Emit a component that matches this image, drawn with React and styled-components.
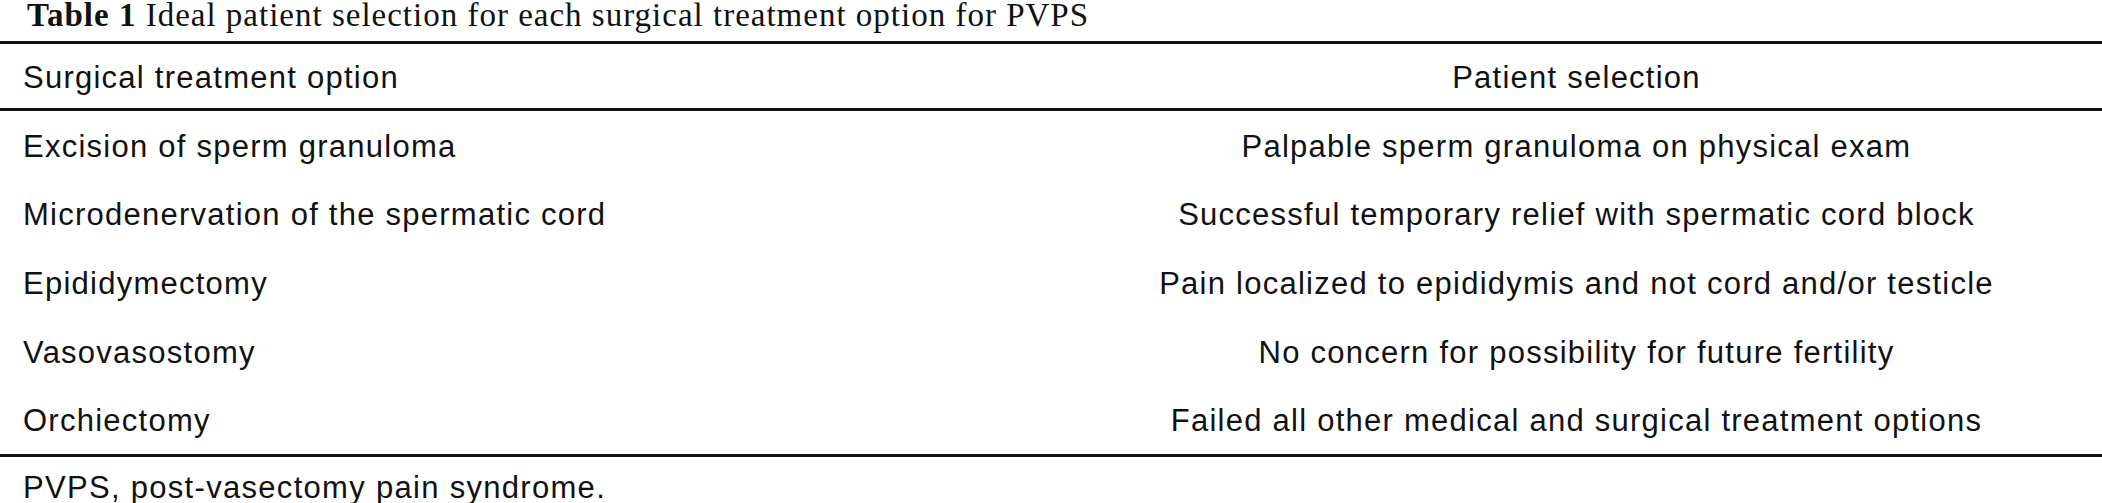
import React from 'react'
import styled, { createGlobalStyle } from 'styled-components'

const GlobalStyle = createGlobalStyle`
  html, body {
    margin: 0;
    padding: 0;
    background: #fff;
  }
  body {
    width: 2102px;
    height: 503px;
    overflow: hidden;
    color: #111;
    font-family: "Liberation Sans", Arial, sans-serif;
  }
`

const Figure = styled.div`
  display: flex;
  flex-direction: column;
  width: 2102px;
`

const Caption = styled.div`
  font-family: "Liberation Serif", "Times New Roman", serif;
  font-size: 33px;
  line-height: 28px;
  letter-spacing: 1px;
  padding: 1px 0 12px 27px;
  white-space: nowrap;

  b {
    font-weight: 700;
  }
`

const Table = styled.div`
  display: flex;
  flex-direction: column;
  border-top: 3px solid #111;
  border-bottom: 3px solid #111;
`

const Row = styled.div`
  display: grid;
  grid-template-columns: 1fr 1fr;
  align-items: center;
  height: ${p => (p.$head ? '64px' : '68.6px')};
  border-bottom: ${p => (p.$head ? '3px solid #111' : 'none')};
`

const Cell = styled.div`
  font-size: 31px;
  letter-spacing: 1.25px;
  line-height: 36px;
  padding-top: 3px;
  white-space: nowrap;
  padding-left: ${p => (p.$center ? '0' : '23px')};
  text-align: ${p => (p.$center ? 'center' : 'left')};
`

const Footnote = styled.div`
  font-size: 31px;
  letter-spacing: 1.3px;
  line-height: 40px;
  padding: 11px 0 0 23px;
  white-space: nowrap;
`

const rows = [
  ['Excision of sperm granuloma', 'Palpable sperm granuloma on physical exam'],
  ['Microdenervation of the spermatic cord', 'Successful temporary relief with spermatic cord block'],
  ['Epididymectomy', 'Pain localized to epididymis and not cord and/or testicle'],
  ['Vasovasostomy', 'No concern for possibility for future fertility'],
  ['Orchiectomy', 'Failed all other medical and surgical treatment options'],
]

export default function App() {
  return (
    <>
      <GlobalStyle />
      <Figure>
        <Caption>
          <b>Table 1</b> Ideal patient selection for each surgical treatment option for PVPS
        </Caption>
        <Table>
          <Row $head>
            <Cell>Surgical treatment option</Cell>
            <Cell $center>Patient selection</Cell>
          </Row>
          {rows.map(([option, selection]) => (
            <Row key={option}>
              <Cell>{option}</Cell>
              <Cell $center>{selection}</Cell>
            </Row>
          ))}
        </Table>
        <Footnote>PVPS, post-vasectomy pain syndrome.</Footnote>
      </Figure>
    </>
  )
}
